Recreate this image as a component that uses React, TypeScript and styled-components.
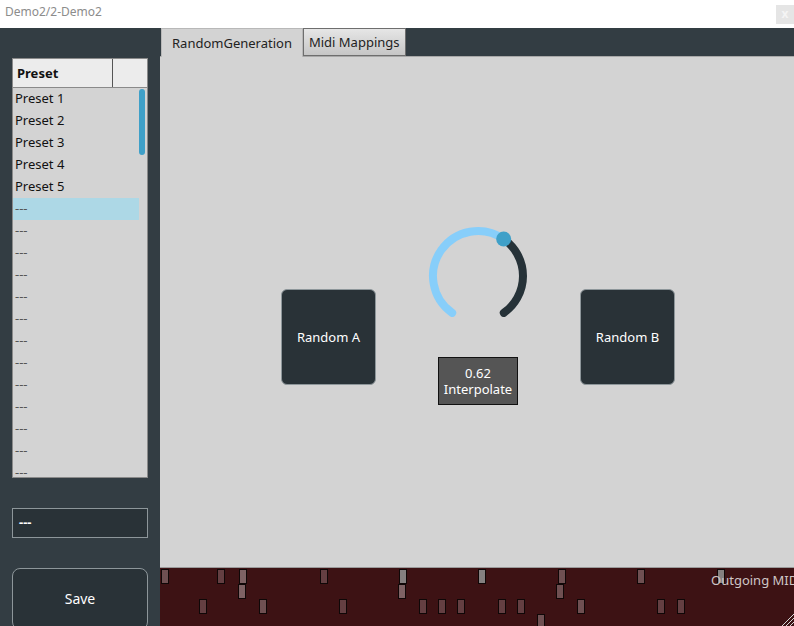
import React from "react";
import styled, {createGlobalStyle} from "styled-components";

const GlobalStyle = createGlobalStyle`
  html, body {
    margin: 0;
    padding: 0;
    background: #ffffff;
  }
  * {
    box-sizing: border-box;
  }
  body {
    font-family: "Noto Sans", "Open Sans", sans-serif;
    font-size: 13px;
  }
`

const presets = ["Preset 1", "Preset 2", "Preset 3", "Preset 4", "Preset 5"];
const emptySlots = 13;

type Shade = "dark" | "mid" | "light" | "gray";

// x is relative to the midi strip, row is the lane (0 = top)
const midiBars: {x: number; row: number; shade: Shade}[] = [
    {x: 1, row: 0, shade: "mid"},
    {x: 57, row: 0, shade: "dark"},
    {x: 79, row: 0, shade: "light"},
    {x: 160, row: 0, shade: "dark"},
    {x: 239, row: 0, shade: "gray"},
    {x: 318, row: 0, shade: "gray"},
    {x: 398, row: 0, shade: "mid"},
    {x: 477, row: 0, shade: "mid"},
    {x: 557, row: 0, shade: "gray"},
    {x: 78, row: 1, shade: "light"},
    {x: 238, row: 1, shade: "light"},
    {x: 396, row: 1, shade: "mid"},
    {x: 39, row: 2, shade: "dark"},
    {x: 99, row: 2, shade: "mid"},
    {x: 179, row: 2, shade: "dark"},
    {x: 259, row: 2, shade: "dark"},
    {x: 278, row: 2, shade: "dark"},
    {x: 297, row: 2, shade: "dark"},
    {x: 338, row: 2, shade: "dark"},
    {x: 357, row: 2, shade: "dark"},
    {x: 417, row: 2, shade: "mid"},
    {x: 497, row: 2, shade: "dark"},
    {x: 517, row: 2, shade: "dark"},
    {x: 377, row: 3, shade: "mid"},
];

const shadeColors: Record<Shade, string> = {
    dark: "#643f42",
    mid: "#6f5052",
    light: "#7e6264",
    gray: "#858080",
};

const polar = (cx: number, cy: number, r: number, deg: number) => {
    const a = (deg * Math.PI) / 180;
    return {x: cx + r * Math.sin(a), y: cy - r * Math.cos(a)};
};

const arcPath = (cx: number, cy: number, r: number, from: number, to: number) => {
    const s = polar(cx, cy, r, from);
    const e = polar(cx, cy, r, to);
    const large = to - from > 180 ? 1 : 0;
    return `M ${s.x} ${s.y} A ${r} ${r} 0 ${large} 1 ${e.x} ${e.y}`;
};

const Knob = ({value}: {value: number}) => {
    const start = -145;
    const end = 145;
    const at = start + (end - start) * value;
    const thumb = polar(50, 50, 45, at);
    return (
        <KnobSvg width={100} height={100} viewBox="0 0 100 100">
            <path d={arcPath(50, 50, 45, at, end)} stroke="#263238" strokeWidth={8} fill="none" strokeLinecap="round"/>
            <path d={arcPath(50, 50, 45, start, at)} stroke="#87cefa" strokeWidth={8} fill="none" strokeLinecap="round"/>
            <circle cx={thumb.x} cy={thumb.y} r={7.5} fill="#3fa0c8"/>
        </KnobSvg>
    );
};

export default function App() {
    const value = 0.62;
    return (
        <>
            <GlobalStyle/>
            <Window>
                <TitleBar>
                    <Title>Demo2/2-Demo2</Title>
                    <CloseButton>x</CloseButton>
                </TitleBar>
                <Main>
                    <Sidebar>
                        <PresetList>
                            <ListHeader>
                                <HeaderCell>Preset</HeaderCell>
                                <HeaderSpare/>
                            </ListHeader>
                            <ListBody>
                                {presets.map(p => <ListRow key={p}>{p}</ListRow>)}
                                {Array.from({length: emptySlots}).map((_, i) => (
                                    <ListRow key={i} $empty $selected={i === 0}>---</ListRow>
                                ))}
                                <ScrollThumb/>
                            </ListBody>
                        </PresetList>
                        <NameField>---</NameField>
                        <SaveButton>Save</SaveButton>
                    </Sidebar>
                    <Workspace>
                        <TabBar>
                            <Tab $active>RandomGeneration</Tab>
                            <Tab>Midi Mappings</Tab>
                        </TabBar>
                        <Content>
                            <ControlRow>
                                <PadButton>Random A</PadButton>
                                <KnobGroup>
                                    <Knob value={value}/>
                                    <ValueBox>
                                        <ValueLine>{value.toFixed(2)}</ValueLine>
                                        <ValueLine>Interpolate</ValueLine>
                                    </ValueBox>
                                </KnobGroup>
                                <PadButton>Random B</PadButton>
                            </ControlRow>
                        </Content>
                        <MidiStrip>
                            {midiBars.map((b, i) => (
                                <MidiBar key={i} $shade={b.shade} style={{left: b.x, top: 1 + b.row * 15}}/>
                            ))}
                            <MidiLabel>Outgoing MIDI</MidiLabel>
                            <Grip width={14} height={14} viewBox="0 0 14 14">
                                <path d="M14 2 L2 14 M14 6 L6 14 M14 10 L10 14" stroke="#d8d8d8" strokeWidth={1}/>
                            </Grip>
                        </MidiStrip>
                    </Workspace>
                </Main>
            </Window>
        </>
    );
}

const Window = styled.div`
  width: 794px;
  height: 626px;
  display: flex;
  flex-direction: column;
  overflow: hidden;
`

const TitleBar = styled.div`
  height: 28px;
  flex-shrink: 0;
  background: #ffffff;
  display: flex;
  align-items: flex-start;
  justify-content: space-between;
  padding-left: 5px;
`

const Title = styled.span`
  font-size: 12px;
  color: #8c8c8c;
  line-height: 24px;
`

const CloseButton = styled.div`
  margin-top: 5px;
  width: 18px;
  height: 19px;
  background: #e5e5e5;
  color: #f4f4f4;
  font-size: 12px;
  line-height: 18px;
  text-align: center;
  font-weight: bold;
`

const Main = styled.div`
  flex: 1;
  display: flex;
  min-height: 0;
`

const Sidebar = styled.div`
  width: 160px;
  flex-shrink: 0;
  background: #333d43;
  padding: 30px 12px 0;
  display: flex;
  flex-direction: column;
  gap: 30px;
  overflow: hidden;
`

const PresetList = styled.div`
  height: 420px;
  flex-shrink: 0;
  background: #d3d3d3;
  border: 1px solid #8a8a8a;
  display: flex;
  flex-direction: column;
  overflow: hidden;
`

const ListHeader = styled.div`
  height: 29px;
  flex-shrink: 0;
  display: flex;
  background: #ececec;
  border-bottom: 1px solid #8a8a8a;
`

const HeaderCell = styled.div`
  width: 100px;
  border-right: 1px solid #555;
  font-weight: bold;
  color: #111;
  padding-left: 4px;
  line-height: 28px;
`

const HeaderSpare = styled.div`
  flex: 1;
`

const ListBody = styled.div`
  position: relative;
  flex: 1;
  overflow: hidden;
`

const ListRow = styled.div<{ $empty?: boolean; $selected?: boolean }>`
  width: 126px;
  height: 22px;
  line-height: 21px;
  padding-left: 2px;
  color: ${p => p.$empty ? "#555" : "#111"};
  background: ${p => p.$selected ? "#add8e6" : "transparent"};
`

const ScrollThumb = styled.div`
  position: absolute;
  top: 1px;
  right: 2px;
  width: 6px;
  height: 66px;
  border-radius: 3px;
  background: #3fa0c8;
`

const NameField = styled.div`
  height: 30px;
  flex-shrink: 0;
  background: #293237;
  border: 1px solid #8d969a;
  color: #ffffff;
  font-weight: bold;
  padding-left: 6px;
  line-height: 26px;
`

const SaveButton = styled.div`
  height: 62px;
  flex-shrink: 0;
  background: #293237;
  border: 1px solid #8d969a;
  border-radius: 8px;
  color: #ffffff;
  font-size: 14px;
  display: flex;
  align-items: center;
  justify-content: center;
  padding-bottom: 2px;
`

const Workspace = styled.div`
  flex: 1;
  display: flex;
  flex-direction: column;
  min-width: 0;
`

const TabBar = styled.div`
  height: 29px;
  flex-shrink: 0;
  background: #333d43;
  border-bottom: 1px solid #a8a8a8;
  display: flex;
  align-items: flex-end;
  padding-left: 1px;
`

const Tab = styled.div<{ $active?: boolean }>`
  height: ${p => p.$active ? "29px" : "28px"};
  margin-bottom: ${p => p.$active ? "-1px" : "0"};
  padding: 0 ${p => p.$active ? "10px" : "5px"};
  display: flex;
  align-items: center;
  color: #222;
  font-size: 13px;
  background: ${p => p.$active ? "#d3d3d3" : "linear-gradient(#e6e6e6, #c6c6c6)"};
  border: 1px solid ${p => p.$active ? "#b8b8b8" : "#6e6e6e"};
  border-bottom: ${p => p.$active ? "none" : "1px solid #6e6e6e"};
  white-space: nowrap;
`

const Content = styled.div`
  flex: 1;
  background: #d3d3d3;
  display: flex;
  align-items: center;
  justify-content: center;
  padding: 6px 0 0 2px;
`

const ControlRow = styled.div`
  display: flex;
  align-items: flex-end;
  gap: 52px;
`

const PadButton = styled.div`
  width: 95px;
  height: 96px;
  margin-bottom: 20px;
  background: #293237;
  border: 1px solid #8d969a;
  border-radius: 6px;
  color: #ffffff;
  display: flex;
  align-items: center;
  justify-content: center;
  font-size: 13px;
`

const KnobGroup = styled.div`
  width: 100px;
  display: flex;
  flex-direction: column;
  align-items: center;
  gap: 31px;
`

const KnobSvg = styled.svg`
  display: block;
`

const ValueBox = styled.div`
  width: 80px;
  height: 48px;
  background: #555555;
  border: 1px solid #111;
  color: #ffffff;
  display: flex;
  flex-direction: column;
  align-items: center;
  justify-content: center;
`

const ValueLine = styled.span`
  display: block;
  height: 16px;
  line-height: 16px;
  font-size: 13px;
`

const MidiStrip = styled.div`
  position: relative;
  height: 59px;
  flex-shrink: 0;
  background: #3d1214;
  border-top: 1px solid #9a9a9a;
  overflow: hidden;
`

const MidiBar = styled.div<{ $shade: Shade }>`
  position: absolute;
  width: 8px;
  height: 15px;
  background: ${p => shadeColors[p.$shade]};
  border: 1px solid #0f0707;
`

const MidiLabel = styled.span`
  position: absolute;
  left: 551px;
  top: 3px;
  color: #cfc6c6;
  font-size: 13px;
  white-space: nowrap;
`

const Grip = styled.svg`
  position: absolute;
  right: 0;
  bottom: 0;
`
